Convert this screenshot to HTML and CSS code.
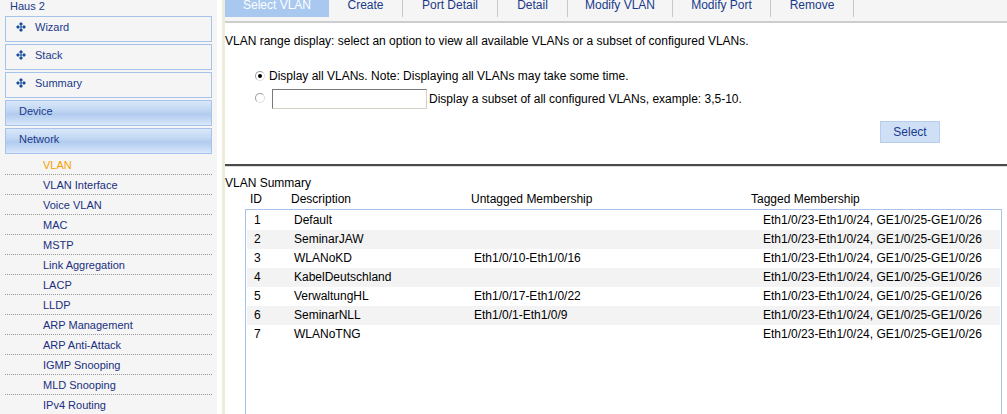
FILE: index.html
```html
<!DOCTYPE html>
<html lang="en">
<head>
  <meta charset="UTF-8">
  <title>VLAN</title>
  <link rel="stylesheet" href="styles.css">
</head>
<body>

  <div class="page">
    <!-- Menu lateral -->
    <div class="sidebar">
      <div class="device-name">Haus 2</div>

      <div class="nav-box"><svg class="bullet" viewBox="0 0 10 10"><path d="M5 0L7 2L5 4L3 2Z M2 3L4 5L2 7L0 5Z M8 3L10 5L8 7L6 5Z M5 6L7 8L5 10L3 8Z M5 3L6 5L5 7L4 5Z"/></svg>Wizard</div>
      <div class="nav-box"><svg class="bullet" viewBox="0 0 10 10"><path d="M5 0L7 2L5 4L3 2Z M2 3L4 5L2 7L0 5Z M8 3L10 5L8 7L6 5Z M5 6L7 8L5 10L3 8Z M5 3L6 5L5 7L4 5Z"/></svg>Stack</div>
      <div class="nav-box"><svg class="bullet" viewBox="0 0 10 10"><path d="M5 0L7 2L5 4L3 2Z M2 3L4 5L2 7L0 5Z M8 3L10 5L8 7L6 5Z M5 6L7 8L5 10L3 8Z M5 3L6 5L5 7L4 5Z"/></svg>Summary</div>
      <div class="nav-box group">Device</div>
      <div class="nav-box group">Network</div>

      <ul class="sub-menu">
        <li class="active">VLAN</li>
        <li>VLAN Interface</li>
        <li>Voice VLAN</li>
        <li>MAC</li>
        <li>MSTP</li>
        <li>Link Aggregation</li>
        <li>LACP</li>
        <li>LLDP</li>
        <li>ARP Management</li>
        <li>ARP Anti-Attack</li>
        <li>IGMP Snooping</li>
        <li>MLD Snooping</li>
        <li>IPv4 Routing</li>
      </ul>
    </div>

    <div class="divider"></div>

    <!-- Conteudo principal -->
    <div class="main">
      <div class="tabs">
        <div class="tab selected" style="width:104px">Select VLAN</div>
        <div class="tab" style="width:74px">Create</div>
        <div class="tab" style="width:95px">Port Detail</div>
        <div class="tab" style="width:70px">Detail</div>
        <div class="tab" style="width:105px">Modify VLAN</div>
        <div class="tab" style="width:98px">Modify Port</div>
        <div class="tab" style="width:83px">Remove</div>
      </div>

      <p class="intro">VLAN range display: select an option to view all available VLANs or a subset of configured VLANs.</p>

      <div class="options">
        <label class="option">
          <input type="radio" name="range" checked>
          <span>Display all VLANs. Note: Displaying all VLANs may take some time.</span>
        </label>
        <label class="option second">
          <input type="radio" name="range">
          <input type="text" class="range-input">
          <span>Display a subset of all configured VLANs, example: 3,5-10.</span>
        </label>
      </div>

      <div class="actions">
        <button type="button" class="btn">Select</button>
      </div>

      <div class="separator"></div>

      <div class="summary-title">VLAN Summary</div>
      <div class="summary-head">
        <span>ID</span>
        <span>Description</span>
        <span>Untagged Membership</span>
        <span>Tagged Membership</span>
      </div>

      <div class="summary-box">
        <div class="row"><span>1</span><span>Default</span><span></span><span>Eth1/0/23-Eth1/0/24, GE1/0/25-GE1/0/26</span></div>
        <div class="row"><span>2</span><span>SeminarJAW</span><span></span><span>Eth1/0/23-Eth1/0/24, GE1/0/25-GE1/0/26</span></div>
        <div class="row"><span>3</span><span>WLANoKD</span><span>Eth1/0/10-Eth1/0/16</span><span>Eth1/0/23-Eth1/0/24, GE1/0/25-GE1/0/26</span></div>
        <div class="row"><span>4</span><span>KabelDeutschland</span><span></span><span>Eth1/0/23-Eth1/0/24, GE1/0/25-GE1/0/26</span></div>
        <div class="row"><span>5</span><span>VerwaltungHL</span><span>Eth1/0/17-Eth1/0/22</span><span>Eth1/0/23-Eth1/0/24, GE1/0/25-GE1/0/26</span></div>
        <div class="row"><span>6</span><span>SeminarNLL</span><span>Eth1/0/1-Eth1/0/9</span><span>Eth1/0/23-Eth1/0/24, GE1/0/25-GE1/0/26</span></div>
        <div class="row"><span>7</span><span>WLANoTNG</span><span></span><span>Eth1/0/23-Eth1/0/24, GE1/0/25-GE1/0/26</span></div>
      </div>
    </div>
  </div>

</body>
</html>
```

FILE: styles.css
```css
/* Reset */
* {
  margin: 0;
  padding: 0;
  box-sizing: border-box;
}

body {
  font-family: 'Liberation Sans', Arial, sans-serif;
  font-size: 12px;
  color: #000;
  background-color: #fff;
  overflow: hidden;
}

.page {
  display: flex;
  height: 414px;
  overflow: hidden;
}

/* Menu lateral */
.sidebar {
  width: 217px;
  flex-shrink: 0;
  background-color: #f5f5f5;
  padding: 0 5px;
  font-size: 11px;
  color: #1a3a8a;
}

.device-name {
  line-height: 13px;
  padding-left: 5px;
  margin-bottom: 3px;
}

.nav-box {
  display: flex;
  align-items: flex-start;
  height: 26px;
  margin-bottom: 2px;
  padding-left: 10px;
  line-height: 20px;
  border: 1px solid #a6c3ea;
  background-color: #f5f5f5;
}

.nav-box .bullet {
  width: 10px;
  height: 10px;
  margin: 5px 9px 0 0;
  fill: #1b4e9e;
}

.nav-box.group {
  padding-left: 13px;
  background: linear-gradient(#dae7f9 0%, #c4d9f4 35%, #b2cbee 55%, #c6dbf5 80%, #dbe8fa 100%);
}

.sub-menu {
  list-style: none;
  margin-top: -1px;
}

.sub-menu li {
  height: 20px;
  padding: 2px 0 0 38px;
  line-height: 17px;
  border-bottom: 1px dotted #999;
  color: #1a2f7e;
}

.sub-menu li.active {
  color: #f5a000;
}

/* Separacao entre menu e conteudo */
.divider {
  width: 8px;
  flex-shrink: 0;
  background-color: #fff;
  border-right: 3px solid #eeeddc;
}

.main {
  flex: 1;
  min-width: 0;
}

/* Abas */
.tabs {
  display: flex;
  height: 29px;
  margin-top: -6px;
  background-color: #f5f5f5;
  border-bottom: 2px solid #cdcdcd;
}

.tab {
  height: 23px;
  line-height: 22px;
  text-align: center;
  color: #1a3a8a;
  border-right: 1px solid #c9c9c9;
}

.tab.selected {
  background-color: #a8c8f0;
  color: #fff;
  border-right: none;
}

.intro {
  margin-top: 11px;
  line-height: 14px;
}

/* Opcoes */
.options {
  margin-top: 18px;
  padding-left: 30px;
}

.option {
  display: flex;
  align-items: center;
  height: 20px;
}

.option.second {
  margin-top: 3px;
}

.option input[type="radio"] {
  appearance: none;
  width: 10px;
  height: 10px;
  margin-right: 4px;
  border-radius: 50%;
  border: 1px solid #a0a0a0;
  border-right-color: #e0e0e0;
  border-bottom-color: #e0e0e0;
  background-color: #fff;
  position: relative;
}

.option input[type="radio"]:checked::after {
  content: "";
  position: absolute;
  left: 2px;
  top: 2px;
  width: 4px;
  height: 4px;
  border-radius: 50%;
  background-color: #000;
}

.option.second input[type="radio"] {
  margin-right: 7px;
  margin-top: -2px;
}

.range-input {
  width: 155px;
  height: 20px;
  margin-right: 2px;
  border: 1px solid #d4d0c8;
  border-top-color: #7a7a7a;
  border-left-color: #7a7a7a;
  background-color: #fff;
}

.actions {
  display: flex;
  justify-content: flex-end;
  margin-top: 12px;
  padding-right: 67px;
}

.btn {
  width: 60px;
  height: 22px;
  background-color: #cfdff6;
  border: 1px solid #b7cdee;
  color: #1a3a8a;
  font-family: 'Liberation Sans', Arial, sans-serif;
  font-size: 12px;
}

.separator {
  height: 3px;
  margin-top: 21px;
  border-top: 2px solid #4a4a4a;
  border-bottom: 1px solid #dcdcdc;
}

/* Tabela de resumo */
.summary-title {
  margin-top: 9px;
  line-height: 14px;
}

.summary-head {
  display: grid;
  grid-template-columns: 41px 180px 280px auto;
  margin-top: 2px;
  padding-left: 25px;
  line-height: 14px;
}

.summary-box {
  margin: 3px 5px 0 20px;
  height: 206px;
  padding: 1px;
  border: 1px solid #a8c4ec;
}

.row {
  display: grid;
  grid-template-columns: 40px 180px 289px auto;
  height: 19px;
  line-height: 19px;
  padding-left: 7px;
}

.row:nth-child(even) {
  background-color: #f3f3f3;
}
```
